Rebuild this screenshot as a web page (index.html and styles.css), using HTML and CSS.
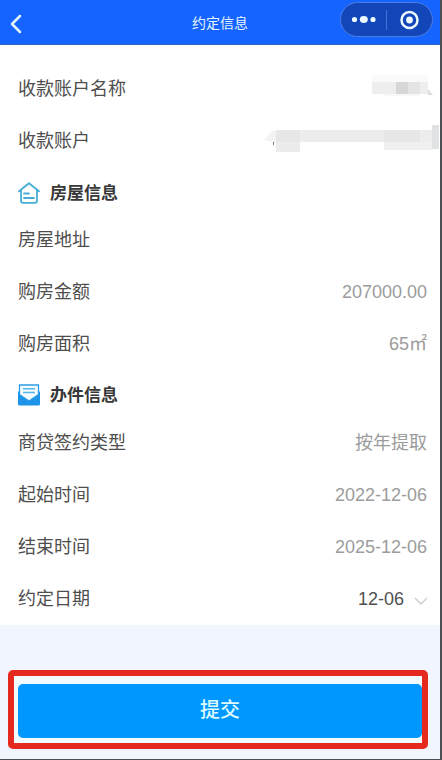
FILE: index.html
```html
<!DOCTYPE html>
<html lang="zh-CN">
<head>
<meta charset="utf-8">
<title>约定信息</title>
<link rel="stylesheet" href="styles.css">
</head>
<body>
<div class="app">
  <header class="header">
    <svg class="back" width="12" height="20" viewBox="0 0 12 20"><path d="M10 2 2 10l8 8"/></svg>
    <h1 class="title">约定信息</h1>
    <div class="capsule">
      <svg width="92" height="34" viewBox="0 0 92 34">
        <circle cx="13.5" cy="16.5" r="2.6"/><ellipse cx="22.8" cy="16.5" rx="4" ry="3.4"/><circle cx="32" cy="16.5" r="2.6"/>
        <path class="divider" d="M45.5 7v20"/>
        <circle class="ring" cx="68.5" cy="17" r="8"/><circle cx="68.5" cy="17" r="3.4"/>
      </svg>
    </div>
  </header>
  <main class="details">
    <div class="row"><span>收款账户名称</span>
      <svg class="mask name-mask" width="62" height="26" viewBox="0 0 62 26">
        <path fill="#fafafa" d="M0 0h56v7H0z"/><path fill="#eee" d="M0 7h56v12H0z"/><path fill="#d7d7d7" d="M24 7h12v12H24z"/><path fill="#e4e4e4" d="M36 7h12v12H36z"/><path fill="#f8f8f8" d="M12 19h36v2H12z"/><path fill="#dedede" d="m56 14 5 6h-5z"/>
      </svg>
    </div>
    <div class="row"><span>收款账户</span>
      <svg class="mask account-mask" width="175" height="28" viewBox="0 0 175 28">
        <path fill="#f3f3f3" d="m0 15 8-9h4v12z"/><path fill="#ededed" d="M12 5h156v12H12z"/><path fill="#e7e7e7" d="M12 5h24v12H12zM120 5h36v12h-36z"/><path fill="#ececec" d="M12 17h24v10H12z"/><path fill="#f0f0f0" d="M120 17h48v8h-48z"/><path fill="#dfe3e3" d="M168 0h7v24h-7z"/><path fill="#777" d="M9 17h1v3H9z"/>
      </svg>
    </div>
    <h2 class="section">
      <svg width="22" height="22" viewBox="0 0 22 22" class="house"><path d="M1 9.3 11 1.2l10 8.1M3 8.2v10.6q0 2 2 2h12q2 0 2-2V8.2M6 11.5h5M6 16h10"/></svg>
      <span>房屋信息</span>
    </h2>
    <div class="row"><span>房屋地址</span></div>
    <div class="row"><span>购房金额</span><span class="value">207000.00</span></div>
    <div class="row"><span>购房面积</span><span class="value">65㎡</span></div>
    <h2 class="section matter">
      <svg width="22" height="22" viewBox="0 0 22 22"><path fill="#1d94e8" d="M0 8l2-2h18l2 2v12q0 1.5-1.5 1.5h-19Q0 21.500 0 20z"/><path fill="#f5fcff" stroke="#2c9de6" stroke-width="1.3" d="M1.500 1h19v9.500L11 17l-9.500-6.500z"/><path fill="none" stroke="#58b5ea" stroke-width="1.5" d="M5 4.700h12M5 8.500h12"/></svg>
      <span>办件信息</span>
    </h2>
    <div class="row"><span>商贷签约类型</span><span class="value">按年提取</span></div>
    <div class="row"><span>起始时间</span><span class="value">2022-12-06</span></div>
    <div class="row"><span>结束时间</span><span class="value">2025-12-06</span></div>
    <div class="row"><span>约定日期</span><span class="value picker">12-06<svg width="14" height="8" viewBox="0 0 14 8"><path d="m1 1 6 6 6-6"/></svg></span></div>
  </main>
  <footer class="footer"><div class="highlight"><button class="submit">提交</button></div></footer>
</div>
</body>
</html>
```
FILE: styles.css
```css
* { box-sizing: border-box; }
body { margin: 0; font-family: "Liberation Sans", "Noto Sans CJK SC", sans-serif; }
.app { width: 442px; height: 760px; background: #f0f5fe; border-right: 2px solid #4b5054; border-bottom: 1px solid #4b5054; display: flex; flex-direction: column; overflow: hidden; }
.header { height: 45px; flex: none; background: #1664ff; border-bottom: 1px solid #3564bd; display: grid; grid-template-columns: 100px 1fr 100px; align-items: center; color: #e4f7ff; }
.back { margin: 3px 0 0 10px; fill: none; stroke: #e4faff; stroke-width: 2.5; stroke-linecap: round; stroke-linejoin: round; }
.title { margin: 2px 0 0; font-size: 14px; line-height: 20px; font-weight: 400; text-align: center; }
.capsule { width: 93px; height: 35px; margin: -6px 0 0; border: 1px solid #4b7ee2; border-radius: 18px; background: #1346b8; }
.capsule svg { display: block; fill: #edfaff; }
.capsule .divider { stroke: #4474d6; }
.capsule .ring { fill: none; stroke: #edfaff; stroke-width: 2.5; }
.details { height: 580px; flex: none; background: #fff; padding: 18px 13px 0 18px; }
.row { height: 52px; display: flex; align-items: center; justify-content: space-between; font-size: 18px; line-height: 26px; color: #4e4e4e; }
.value { color: #9c9c9c; }
.mask { flex: none; }
.name-mask { margin: -2px -7px 0 0; }
.account-mask { margin: -4px -12px 0 0; }
.section { height: 47px; margin: 0; padding-top: 4px; display: flex; align-items: center; gap: 10px; color: #383838; font-size: 17px; line-height: 24px; font-weight: 700; }
.section span { padding-top: 2px; }
.section svg { flex: none; }
.house { fill: none; stroke: #46aed5; stroke-width: 1.8; stroke-linecap: round; stroke-linejoin: round; }
.matter { height: 47px; padding-top: 3px; }
.picker { color: #505050; display: flex; align-items: center; gap: 10px; margin-right: -1px; }
.picker svg { margin-top: 4px; fill: none; stroke: #ccc; stroke-width: 1.4; }
.footer { padding: 45px 12px 0 8px; }
.highlight { height: 79px; border: 6px solid #e6291f; border-radius: 5px; background: #f0faff; padding: 8px 0 5px 4px; }
.submit { display: block; width: 100%; height: 54px; border: 0; border-radius: 5px; padding: 0 0 4px; background: #0098ff; color: #dcfaff; font: 500 20px/28px "Noto Sans CJK SC", sans-serif; }
```
